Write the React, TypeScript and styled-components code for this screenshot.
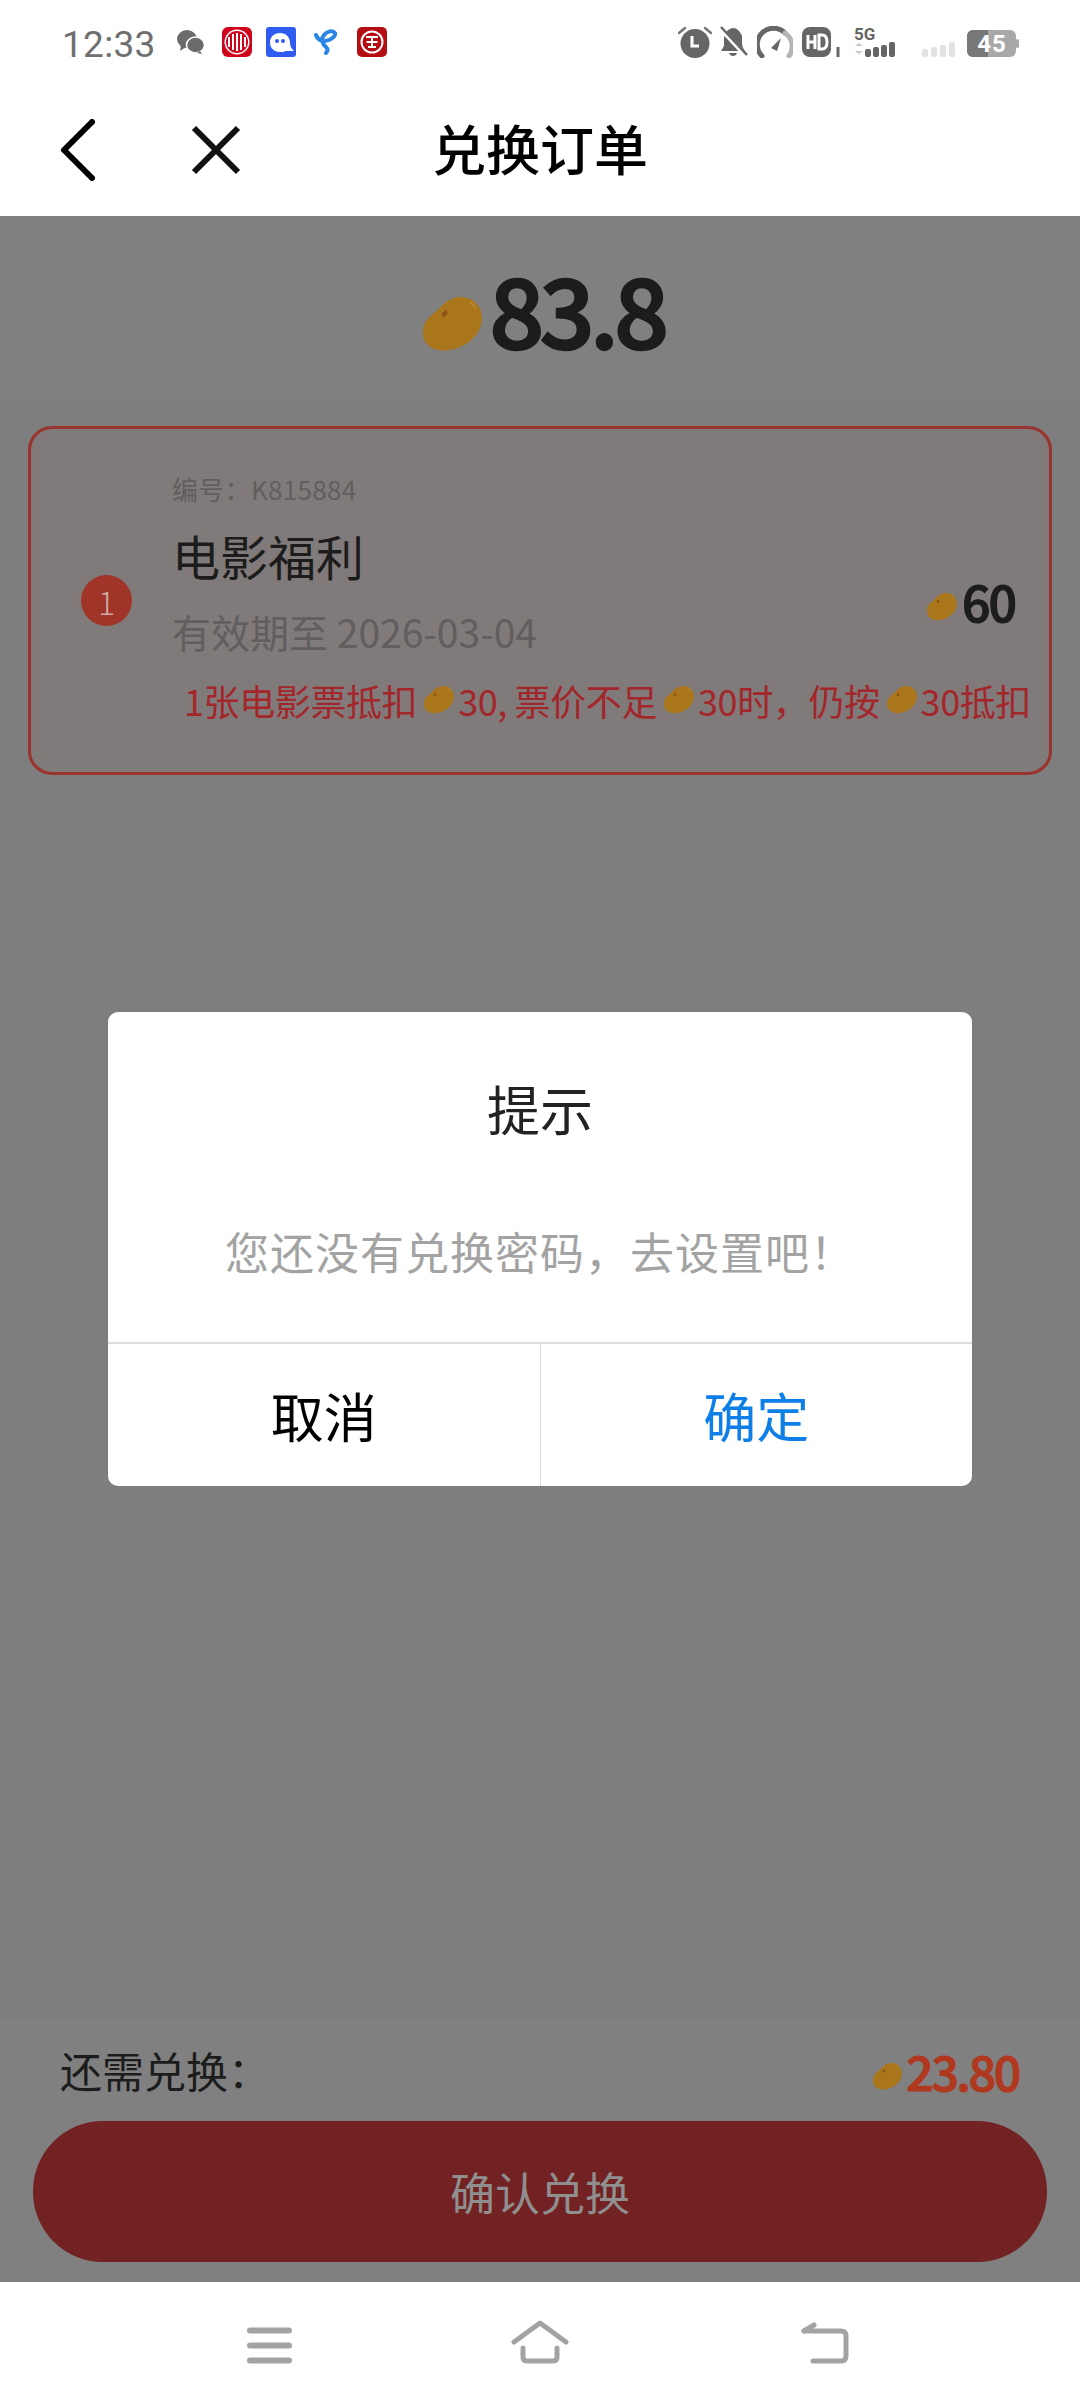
import React from "react"
import styled, { createGlobalStyle } from "styled-components"

const Sans = `"Noto Sans CJK SC", "Noto Sans", sans-serif`

// the page under the dialog is dimmed, these are the colours as they end up on screen
const Dim = {
  page: "#7e7e7e",
  section: "#808080",
  card: "#817a7a",
  cardBorder: "#9a332e",
  badge: "#a03428",
  ink: "#1c1c1c",
  muted: "#605e5e",
  note: "#a3262a",
  amount: "#b0381f",
  button: "#722222",
  buttonText: "#8f8f8f",
}

let GlobalStyle = createGlobalStyle`
  html, body {
    margin: 0;
    padding: 0;
    background: #ffffff;
  }
  * {
    box-sizing: border-box;
  }
`

let Screen = styled.div`
  width: 1080px;
  height: 2408px;
  display: flex;
  flex-direction: column;
  overflow: hidden;
  font-family: ${Sans};
  background: #ffffff;
`

let StatusBar = styled.div`
  height: 84px;
  flex: none;
  display: flex;
  align-items: center;
  justify-content: space-between;
  padding: 0 61px 0 62px;
`
let StatusGroup = styled.div`
  display: flex;
  align-items: center;
`
let Clock = styled.span`
  font-family: "Roboto", sans-serif;
  font-size: 37px;
  color: #6f6f6f;
  width: 115px;
  letter-spacing: 0.3px;
  margin-top: 4px;
`
let StatusIcon = styled.svg<{ $gap?: number }>`
  display: block;
  flex: none;
  margin-left: ${(p) => p.$gap ?? 0}px;
`

let Header = styled.div`
  height: 132px;
  flex: none;
  display: flex;
  align-items: center;
  position: relative;
  padding: 0 0 0 60px;
`
let HeaderTitle = styled.div`
  position: absolute;
  left: 0;
  right: 0;
  top: 30px;
  text-align: center;
  font-size: 54px;
  line-height: 68px;
  font-weight: 500;
  color: #000;
`
let HeaderButton = styled.svg<{ $gap?: number }>`
  display: block;
  margin-left: ${(p) => p.$gap ?? 0}px;
`

let Main = styled.div`
  flex: 1;
  position: relative;
  display: flex;
  flex-direction: column;
  background: ${Dim.page};
`
let DialogLayer = styled.div`
  position: absolute;
  inset: 0;
  display: flex;
  align-items: center;
  justify-content: center;
`

let Balance = styled.div`
  height: 183px;
  flex: none;
  background: ${Dim.section};
  display: flex;
  align-items: center;
  justify-content: center;
  padding-left: 7px;
`
let BalanceValue = styled.span`
  font-size: 96px;
  line-height: 120px;
  font-weight: 500;
  color: ${Dim.ink};
  letter-spacing: -4.5px;
  -webkit-text-stroke: 2.5px ${Dim.ink};
`

let List = styled.div`
  flex: 1;
  padding: 27px 28px 0;
`
let Ticket = styled.div`
  height: 349px;
  border: 3px solid ${Dim.cardBorder};
  border-radius: 24px;
  background: ${Dim.card};
  display: flex;
  align-items: center;
`
let Badge = styled.div`
  width: 51px;
  height: 51px;
  flex: none;
  margin-left: 50px;
  border-radius: 50%;
  background: ${Dim.badge};
  color: #cfa9a5;
  font-size: 32px;
  font-weight: 300;
  display: flex;
  align-items: center;
  justify-content: center;
`
let TicketBody = styled.div`
  flex: 1;
  min-width: 0;
  padding: 0 0 4px 40px;
  display: flex;
  flex-direction: column;
`
let TicketCode = styled.div`
  margin-top: 2px;
  font-size: 26px;
  line-height: 36px;
  letter-spacing: 0.3px;
  color: ${Dim.muted};
`
let TicketName = styled.div`
  margin-top: 18px;
  font-size: 48px;
  line-height: 60px;
  color: ${Dim.ink};
`
let TicketRow = styled.div`
  display: flex;
  align-items: center;
  justify-content: space-between;
  padding-right: 34px;
`
let TicketExpiry = styled.div`
  margin-top: 21px;
  font-size: 39px;
  line-height: 50px;
  color: ${Dim.muted};
`
let TicketPrice = styled.div`
  display: flex;
  align-items: center;
  font-size: 50px;
  line-height: 60px;
  font-weight: 500;
  color: ${Dim.ink};
  letter-spacing: -2px;
  -webkit-text-stroke: 1.2px ${Dim.ink};
  margin-top: -42px;
`
let TicketNote = styled.div`
  margin-top: 16px;
  padding-left: 12px;
  display: flex;
  align-items: center;
  font-size: 36px;
  line-height: 56px;
  color: ${Dim.note};
  white-space: nowrap;
  letter-spacing: -0.4px;
`

let Footer = styled.div`
  flex: none;
  height: 262px;
  background: ${Dim.section};
  padding: 13px 33px 20px;
  display: flex;
  flex-direction: column;
`
let FooterRow = styled.div`
  height: 73px;
  display: flex;
  align-items: center;
  justify-content: space-between;
  padding: 0 28px 0 27px;
`
let FooterLabel = styled.span`
  font-size: 42px;
  color: ${Dim.ink};
`
let FooterAmount = styled.span`
  display: flex;
  align-items: center;
  font-size: 48px;
  font-weight: 500;
  color: ${Dim.amount};
  letter-spacing: -2.2px;
  -webkit-text-stroke: 1.2px ${Dim.amount};
`
let ConfirmButton = styled.div`
  height: 141px;
  margin-top: 15px;
  border-radius: 70px;
  background: ${Dim.button};
  color: ${Dim.buttonText};
  font-size: 45px;
  display: flex;
  align-items: center;
  justify-content: center;
`

let Dialog = styled.div`
  width: 864px;
  height: 474px;
  border-radius: 10px;
  background: #ffffff;
  display: flex;
  flex-direction: column;
  overflow: hidden;
`
let DialogBody = styled.div`
  height: 330px;
  flex: none;
  display: flex;
  flex-direction: column;
  align-items: center;
`
let DialogTitle = styled.div`
  margin-top: 61px;
  font-size: 53px;
  line-height: 70px;
  color: #222;
`
let DialogMessage = styled.div`
  margin-top: 78px;
  font-size: 44px;
  line-height: 60px;
  color: #a3a3a3;
  letter-spacing: 1px;
`
let DialogActions = styled.div`
  flex: 1;
  display: flex;
  border-top: 2px solid #dddddd;
`
let DialogAction = styled.div<{ $primary?: boolean }>`
  flex: 1;
  display: flex;
  align-items: center;
  justify-content: center;
  font-size: 53px;
  color: ${(p) => (p.$primary ? "#0f7fe8" : "#000000")};
  & + & {
    border-left: 1px solid #dddddd;
  }
`

let NavBar = styled.div`
  height: 126px;
  flex: none;
  background: #ffffff;
  display: flex;
  align-items: flex-end;
  padding: 0 0 44px 247px;
`
let NavIcon = styled.svg<{ $gap?: number }>`
  display: block;
  margin-left: ${(p) => p.$gap ?? 0}px;
`

let BeanIcon = styled.svg<{ $left: number; $right: number; $top: number }>`
  display: block;
  flex: none;
  margin: ${(p) => p.$top}px ${(p) => p.$right}px 0 ${(p) => p.$left}px;
`

type BeanProps = {
  width: number
  left?: number
  right?: number
  top?: number
}

function Bean({ width, left = 0, right = 0, top = 0 }: BeanProps) {
  return (
    <BeanIcon $left={left} $right={right} $top={top} width={width} height={(width * 53) / 58} viewBox="0 0 58 53">
      <path
        d="M0 32C1 24 7 19 12 15C18 10 22 2 35 0C48 -1 58 8 58 21C58 33 49 44 37 49C26 54 14 54 7 49C2 45 -1 39 0 32Z"
        fill="#a9761c"
      />
      <path d="M18 17L23 12L24 17L20 20Z" fill="#8a5318" />
      <path d="M45 4C49 6 52 8 53 12C49 10 47 8 45 4Z" fill="#b98a34" />
    </BeanIcon>
  )
}

function StatusIconsLeft() {
  return (
    <>
      <StatusIcon width="28" height="24" viewBox="0 0 28 24">
        <ellipse cx="10" cy="9" rx="10" ry="9" fill="#6b6b6b" />
        <path d="M4 15L3 21L9 17Z" fill="#6b6b6b" />
        <ellipse cx="18.5" cy="15" rx="9" ry="8" fill="#6b6b6b" stroke="#fff" strokeWidth="1.5" />
        <path d="M23 21L25 24L20 23Z" fill="#6b6b6b" />
      </StatusIcon>
      <StatusIcon $gap={17} width="30" height="30" viewBox="0 0 30 30">
        <rect width="30" height="30" rx="6" fill="#d0021b" />
        <circle cx="15" cy="15" r="12.5" fill="#fff" />
        <circle cx="15" cy="15" r="11" fill="#d0021b" />
        <path d="M7 10v10M11 7v16M15 6v18M19 7v16M23 10v10" stroke="#fff" strokeWidth="2" />
      </StatusIcon>
      <StatusIcon $gap={14} width="30" height="30" viewBox="0 0 30 30">
        <rect width="30" height="30" rx="3" fill="#2f5bf0" />
        <path d="M14 6C20 6 24 10 24 16C24 19 25 21 28 24L20 24C18 25 16 25 14 25C8 25 4 21 4 15.5C4 10 8 6 14 6Z" fill="#fff" />
        <circle cx="11" cy="14" r="2" fill="#2f5bf0" />
        <circle cx="17" cy="14" r="2" fill="#2f5bf0" />
      </StatusIcon>
      <StatusIcon $gap={18} width="24" height="26" viewBox="0 0 24 26">
        <path d="M2 6C4 12 10 13 15 11C19 9 22 7 21 4C19 1 13 2 10 6C7 10 8 15 12 18C14 20 14 22 12 24" fill="none" stroke="#2b86e8" strokeWidth="4" strokeLinecap="round" />
      </StatusIcon>
      <StatusIcon $gap={19} width="30" height="30" viewBox="0 0 30 30">
        <rect width="30" height="30" rx="5" fill="#b40d12" />
        <circle cx="15" cy="15" r="10.5" fill="none" stroke="#fff" strokeWidth="2" />
        <path d="M9 10h12M15 10v5M9.5 15h11M11 20h8M15 15v5" stroke="#fff" strokeWidth="2" fill="none" />
      </StatusIcon>
    </>
  )
}

function StatusIconsRight() {
  return (
    <>
      <StatusIcon width="34" height="32" viewBox="0 0 34 32">
        <circle cx="17" cy="17.5" r="14.5" fill="#666" />
        <path d="M14 10v10h7" fill="none" stroke="#fff" strokeWidth="3" />
        <path d="M1 7L7 2M33 7L27 2" stroke="#777" strokeWidth="2.5" strokeLinecap="round" />
      </StatusIcon>
      <StatusIcon $gap={8} width="28" height="32" viewBox="0 0 28 32">
        <path d="M13 2C7 3 4 8 4 13V20L1 25H25C23 22 22 20 22 17V10C20 5 17 2 13 2ZM9 27C10 31 16 31 17 27Z" fill="#666" />
        <path d="M1 3L27 31" stroke="#fff" strokeWidth="4.5" />
        <path d="M1 1L27 29" stroke="#666" strokeWidth="2.5" />
      </StatusIcon>
      <StatusIcon $gap={9} width="36" height="32" viewBox="0 0 36 32">
        <path d="M5 30A16 16 0 0 1 28 7" fill="none" stroke="#666" strokeWidth="5" strokeLinecap="round" />
        <path d="M28 7A16 16 0 0 1 32 30" fill="none" stroke="#b4b4b4" strokeWidth="5" strokeLinecap="round" />
        <path d="M14 22L24 12L20 25Z" fill="#666" />
      </StatusIcon>
      <StatusIcon $gap={9} width="41" height="32" viewBox="0 0 41 32">
        <rect x="0" y="1" width="29" height="30" rx="8" fill="#666" />
        <path d="M6 9v14M13 9v14M6 16h7M17 9v14h3c4 0 5-3 5-7s-1-7-5-7Z" fill="none" stroke="#fff" strokeWidth="3" />
        <path d="M36 21v10" stroke="#666" strokeWidth="3" />
      </StatusIcon>
      <StatusIcon $gap={11} width="46" height="40" viewBox="0 -4 46 40">
        <text x="0" y="14" fontFamily="Roboto, sans-serif" fontSize="17" fontWeight="700" fill="#666">5G</text>
        <path d="M1 20L5 17L9 20ZM1 25L5 28L9 25Z" fill="#c8c8c8" />
        <rect x="11" y="23" width="6" height="8" rx="2" fill="#666" />
        <rect x="19" y="21" width="6" height="10" rx="2" fill="#666" />
        <rect x="27" y="19" width="6" height="12" rx="2" fill="#666" />
        <rect x="35" y="16" width="6" height="15" rx="2" fill="#666" />
      </StatusIcon>
      <StatusIcon $gap={22} width="34" height="32" viewBox="0 0 34 32">
        <rect x="0" y="23" width="6" height="8" rx="2" fill="#e2e2e2" />
        <rect x="9" y="21" width="6" height="10" rx="2" fill="#e2e2e2" />
        <rect x="18" y="19" width="6" height="12" rx="2" fill="#e2e2e2" />
        <rect x="27" y="16" width="6" height="15" rx="2" fill="#e2e2e2" />
      </StatusIcon>
      <StatusIcon $gap={11} width="52" height="32" viewBox="0 0 52 32">
        <rect x="0" y="4" width="49" height="27" rx="6" fill="#a8a8a8" />
        <path d="M6 4H21V31H6A6 6 0 0 1 0 25V10A6 6 0 0 1 6 4Z" fill="#777" />
        <rect x="49" y="13" width="3" height="9" rx="1.5" fill="#a8a8a8" />
        <text x="25" y="26" textAnchor="middle" fontFamily="Roboto, sans-serif" fontSize="24" fontWeight="700" letterSpacing="1" fill="#fff">45</text>
      </StatusIcon>
    </>
  )
}

export default function App() {
  return (
    <Screen>
      <GlobalStyle />
      <StatusBar>
        <StatusGroup>
          <Clock>12:33</Clock>
          <StatusIconsLeft />
        </StatusGroup>
        <StatusGroup>
          <StatusIconsRight />
        </StatusGroup>
      </StatusBar>
      <Header>
        <HeaderButton width="36" height="62" viewBox="0 0 36 62">
          <path d="M32 3L4 31L32 59" fill="none" stroke="#000" strokeWidth="6" strokeLinecap="round" strokeLinejoin="round" />
        </HeaderButton>
        <HeaderButton $gap={95} width="50" height="50" viewBox="0 0 50 50">
          <path d="M3 3L47 47M47 3L3 47" fill="none" stroke="#111" strokeWidth="6" />
        </HeaderButton>
        <HeaderTitle>兑换订单</HeaderTitle>
      </Header>
      <Main>
        <Balance>
          <Bean width={59} right={8} top={33} />
          <BalanceValue>83.8</BalanceValue>
        </Balance>
        <List>
          <Ticket>
            <Badge>1</Badge>
            <TicketBody>
              <TicketCode>编号：K815884</TicketCode>
              <TicketName>电影福利</TicketName>
              <TicketRow>
                <TicketExpiry>有效期至 2026-03-04</TicketExpiry>
                <TicketPrice>
                  <Bean width={30} right={5} top={14} />
                  60
                </TicketPrice>
              </TicketRow>
              <TicketNote>
                1张电影票抵扣
                <Bean width={30} left={7} right={4} />
                30, 票价不足
                <Bean width={30} left={7} right={4} />
                30时，仍按
                <Bean width={30} left={7} right={4} />
                30抵扣
              </TicketNote>
            </TicketBody>
          </Ticket>
        </List>
        <Footer>
          <FooterRow>
            <FooterLabel>还需兑换：</FooterLabel>
            <FooterAmount>
              <Bean width={29} right={4} top={14} />
              23.80
            </FooterAmount>
          </FooterRow>
          <ConfirmButton>确认兑换</ConfirmButton>
        </Footer>
        <DialogLayer>
          <Dialog>
            <DialogBody>
              <DialogTitle>提示</DialogTitle>
              <DialogMessage>您还没有兑换密码，去设置吧！</DialogMessage>
            </DialogBody>
            <DialogActions>
              <DialogAction>取消</DialogAction>
              <DialogAction $primary>确定</DialogAction>
            </DialogActions>
          </Dialog>
        </DialogLayer>
      </Main>
      <NavBar>
        <NavIcon width="45" height="37" viewBox="0 0 45 37">
          <path d="M3 3.5H42M3 18.5H42M3 33.5H42" stroke="#a3a3a3" strokeWidth="6" strokeLinecap="round" />
        </NavIcon>
        <NavIcon $gap={219} width="58" height="44" viewBox="0 0 58 44">
          <path d="M3 22L29 3L55 22" fill="none" stroke="#a3a3a3" strokeWidth="5" strokeLinecap="round" strokeLinejoin="round" />
          <path d="M12 28V37Q12 41 16 41H42Q46 41 46 37V28" fill="none" stroke="#a3a3a3" strokeWidth="5" strokeLinecap="round" strokeLinejoin="round" />
        </NavIcon>
        <NavIcon $gap={232} width="48" height="42" viewBox="0 0 48 42">
          <path d="M3 9L13 3" fill="none" stroke="#a3a3a3" strokeWidth="5" strokeLinecap="round" />
          <path d="M3 9H40Q45 9 45 14V34Q45 39 40 39H12" fill="none" stroke="#a3a3a3" strokeWidth="5" strokeLinecap="round" strokeLinejoin="round" />
        </NavIcon>
      </NavBar>
    </Screen>
  )
}
